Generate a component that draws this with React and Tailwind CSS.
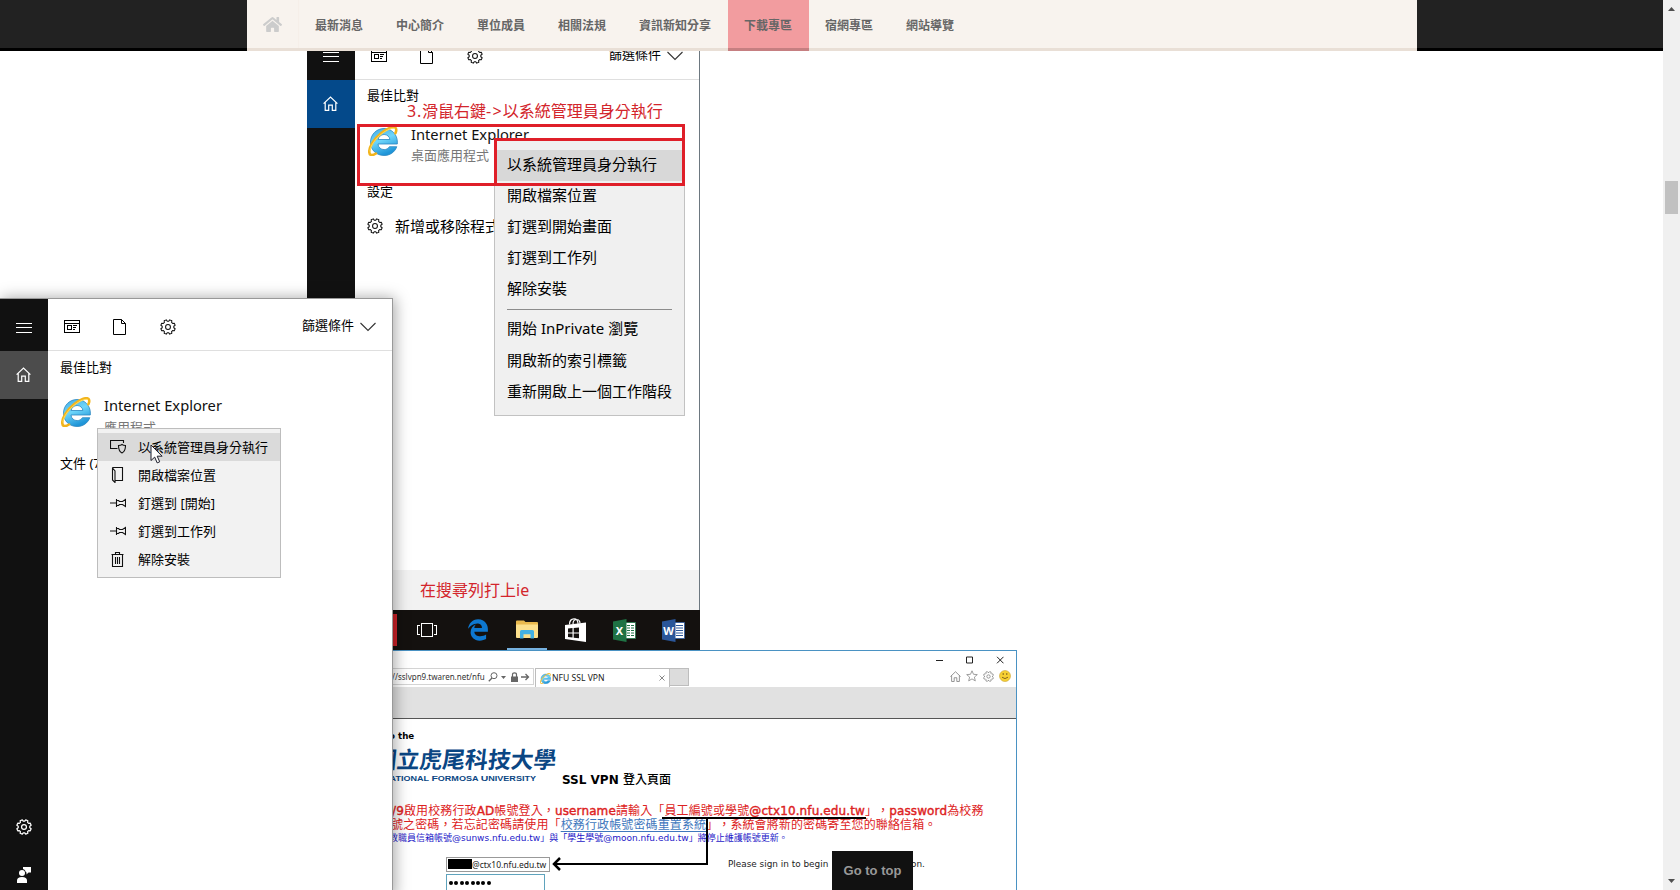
import React from "react";
import { FaHome, FaEdgeLegacy } from "react-icons/fa";

const UI = "font-['Noto_Sans','Noto_Sans_CJK_TC',sans-serif]";

function gearPath(c, outer, inner, teeth) {
  const pts = [];
  const step = (Math.PI * 2) / teeth;
  for (let i = 0; i < teeth; i++) {
    const a = i * step - Math.PI / 2 + step / 2;
    [[-0.34, inner], [-0.2, outer], [0.2, outer], [0.34, inner]].forEach(([k, r]) => {
      pts.push(`${(c + Math.cos(a + k * step) * r).toFixed(2)} ${(c + Math.sin(a + k * step) * r).toFixed(2)}`);
    });
  }
  return `M${pts.join("L")}Z`;
}

function Gear({ size = 17, stroke = "#111", width = 1.1 }) {
  return (
    <svg width={size} height={size} viewBox="0 0 17 17" fill="none" stroke={stroke} strokeWidth={width} strokeLinejoin="round" className="shrink-0">
      <path d={gearPath(8.5, 7.8, 6.2, 8)} />
      <circle cx="8.5" cy="8.5" r="2.6" />
    </svg>
  );
}

function IELogo({ size = 30 }) {
  return (
    <svg width={size} height={size} viewBox="0 0 30 30" fill="none" className="shrink-0">
      <defs>
        <linearGradient id="ieBlue" x1="0" y1="0" x2="0.4" y2="1">
          <stop offset="0" stopColor="#3fa9e4" />
          <stop offset="0.5" stopColor="#6fd6fa" />
          <stop offset="1" stopColor="#1f95d8" />
        </linearGradient>
      </defs>
      <path
        d="M16 2.5C8.500 2.500 2.500 8.500 2.500 16.200 2.500 24 8.500 29.500 16 29.500c6 0 10.800-3.400 12.800-8.800h-7.400c-1.100 1.800-3 2.900-5.200 2.900-3.400 0-6-2.300-6.200-5.600h19.300c.1-.6.1-1.200.1-1.800C29.400 8.500 23.500 2.500 16 2.500Zm-5.900 11c.6-3 3-5 6-5s5.400 2 5.800 5Z"
        fill="url(#ieBlue)"
        stroke="#2b86c0"
        strokeWidth="0.8"
      />
      <path d="M8 27.500C4.500 29.800 1.600 29.800 1.300 26.400 .800 20.500 6.500 12.500 13 7.300 19 2.500 25.500-.200 27.600 2c1 1.200.8 3-.2 5.200" stroke="#f2b41c" strokeWidth="2.600" strokeLinecap="round" />
      <path d="M2 25C2.500 19.500 7.500 12.800 13.400 8.100 18.800 3.800 24 1.700 26.500 2.400" stroke="#ffe36b" strokeWidth="0.9" strokeLinecap="round" />
    </svg>
  );
}

function Burger() {
  return (
    <svg width="16" height="10" viewBox="0 0 16 10" stroke="#fff" strokeWidth="1" shapeRendering="crispEdges">
      <path d="M0 .5h16M0 4.500h16M0 9.500h16" />
    </svg>
  );
}

function HomeOutline({ size = 15, stroke = "#fff" }) {
  return (
    <svg width={size} height={size} viewBox="0 0 15 15" fill="none" stroke={stroke} strokeWidth="1.200">
      <path d="M.6 7.600 7.500 1l6.900 6.600M2.200 6.300v8h3.500V9.200h3.600v5.100h3.500v-8" />
    </svg>
  );
}

function PanelToolbar() {
  return (
    <div className="flex h-[52px] items-center border-b border-[#dfdfdf] pt-[4px] pl-4 pr-4">
      <svg width="16" height="13" viewBox="0 0 16 13" fill="none" stroke="#000" shapeRendering="crispEdges" className="mr-[33px]">
        <path d="M.5.5h15v12H.5zM.5 3.500h15M3.500 5.500h4v4h-4zM9 5.500h4M9 7.500h3M9 9.500h2" />
      </svg>
      <svg width="13" height="16" viewBox="0 0 13 16" fill="none" stroke="#000" className="mr-[34px]">
        <path d="M.5.5h8l4 4v11H.5zM8.500.5v4h4" />
      </svg>
      <Gear size={16} />
      <div className="mb-[3px] ml-auto flex items-center">
        <span className="text-[13px] leading-4 text-black">篩選條件</span>
        <svg width="16" height="10" viewBox="0 0 16 10" fill="none" stroke="#333" strokeWidth="1.100" className="mt-1 ml-[6px]">
          <path d="M.5 1 8 8.500 15.500 1" />
        </svg>
      </div>
    </div>
  );
}

function BackPanel() {
  return (
    <section className="absolute top-[28px] left-[307px] flex h-[622px] w-[393px] flex-col bg-white">
      <div className="flex h-[582px]">
        <div className="flex w-12 flex-col bg-[#111]">
          <div className="flex h-[52px] items-center justify-center pt-[5px]"><Burger /></div>
          <div className="flex h-12 items-center justify-center bg-[#04498a] pr-px pb-px"><HomeOutline /></div>
        </div>
        <div className="flex flex-1 flex-col border-r border-[#6d7880]">
          <PanelToolbar />
          <div className="mt-[6px] h-[18px] pl-[12px] text-[13px] leading-[18px]">最佳比對</div>
          <div className="mt-[22px] flex pl-[13px]">
            <IELogo />
            <div className="-mt-[2px] ml-[13px]">
              <div className="h-[21px] text-[14.700px] leading-5 text-[#111]">Internet Explorer</div>
              <div className="h-5 text-[13px] leading-5 text-[#777]">桌面應用程式</div>
            </div>
          </div>
          <div className="mt-[17px] h-[18px] pl-[12px] text-[13px] leading-[18px]">設定</div>
          <div className="mt-[16px] flex h-5 items-center pl-[12px] text-[15px] leading-5">
            <Gear size={16} />
            <span className="ml-[12px]">新增或移除程式</span>
          </div>
          <div className="mt-auto flex h-10 items-center bg-[#f2f2f2] pl-[65px] text-[16px] leading-6 text-[#d3252c]">在搜尋列打上ie</div>
        </div>
      </div>
      <Taskbar />
      <div className="absolute top-[71px] left-[100px] text-[16px] leading-6 whitespace-nowrap text-[#d3252c]">
        <span className="tracking-[0.800px]">3.</span>滑鼠右鍵<span className="tracking-[1.200px]">-&gt;</span>以系統管理員身分執行
      </div>
      <BackMenu />
      <div className="absolute top-[96px] left-[50px] h-[62px] w-[328px] border-[3px] border-[#df1f29]" />
      <div className="absolute top-[110px] left-[187px] h-[48px] w-[191px] border-[3px] border-[#df1f29]" />
    </section>
  );
}

function BackMenu() {
  const first = ["開啟檔案位置", "釘選到開始畫面", "釘選到工作列", "解除安裝"];
  const second = ["開始 InPrivate 瀏覽", "開啟新的索引標籤", "重新開啟上一個工作階段"];
  return (
    <div className="absolute top-[111px] left-[187px] h-[277px] w-[191px] border border-[#c2c2c2] bg-[#f0f0f0] pt-[10px] text-[15px] text-black">
      <div className="flex h-[31px] items-center bg-[#d8d8d8] pb-1 pl-[12px] leading-5">以系統管理員身分執行</div>
      {first.map((t) => (
        <div key={t} className="flex h-[31px] items-center pb-1 pl-[12px] leading-5">{t}</div>
      ))}
      <div className="mt-[4px] mr-[12px] mb-[3px] ml-[12px] h-px bg-[#8c8c8c]" />
      {second.map((t) => (
        <div key={t} className="flex h-[31.400px] items-center pb-px pl-[12px] leading-5 whitespace-nowrap">{t}</div>
      ))}
    </div>
  );
}

function OfficeIcon({ letter, color, dark }) {
  return (
    <div className="relative flex h-[23px] w-[23px] items-center">
      <svg width="23" height="23" viewBox="0 0 23 23">
        <path d="M12 3.500h10.500v16H12z" fill="#fff" stroke={color} strokeWidth="0.800" />
        <path d="M14 6.500h7M14 9h7M14 11.500h7M14 14h7M14 16.500h7" stroke={color} strokeWidth="1" />
        {letter === "X" && <path d="M17.500 5v13" stroke="#fff" strokeWidth="1" />}
        <path d="M0 2.500 13.500 0v23L0 20.500z" fill={dark} />
      </svg>
      <span className="absolute left-0 w-[13px] text-center text-[11px] leading-none font-bold text-white">{letter}</span>
    </div>
  );
}

function Taskbar() {
  return (
    <div className="flex h-10 bg-[#14110f]">
      <div className="mt-[4px] h-8 w-[90px] border-4 border-[#cf2229]" />
      <div className="ml-[20px] flex items-center">
        <svg width="20" height="14" viewBox="0 0 20 14" fill="none" stroke="#fff" shapeRendering="crispEdges">
          <path d="M4.500.5h11v13h-11zM3 2.500H.5v9H3M17 2.500h2.500v9H17" />
        </svg>
      </div>
      <div className="ml-[30px] flex items-center"><FaEdgeLegacy size={22} color="#0e78d0" /></div>
      <div className="ml-[18px] flex w-10 flex-col items-center border-b-2 border-[#76b1df] pt-[10px]">
        <svg width="22" height="19" viewBox="0 0 22 19">
          <path d="M0 1.500Q0 .5 1 .5h7l1.500 1.500H21q1 0 1 1V17H0z" fill="#e9b94d" />
          <path d="M0 4.500h22V17q0 1-1 1H1q-1 0-1-1z" fill="#fce08c" />
          <path d="M4 18.500v-7q0-1.500 1.500-1.500h11q1.500 0 1.500 1.500v7h-3.500v-4.300h-7v4.300z" fill="#43b1e3" />
        </svg>
      </div>
      <div className="ml-[18px] flex items-center">
        <svg width="21" height="24" viewBox="0 0 21 24">
          <path d="M0 7 21 4.500V24L0 21z" fill="#fff" />
          <path d="M4.500 6.500C4.500 2 7 .8 9 .8s4 1.500 4 5M8 6C8 2.500 9.800 1.500 11.500 1.500S15 2.800 15 5.500" fill="none" stroke="#fff" strokeWidth="1.200" />
          <path d="M3 10.500l4.500-.4v4.300H3zM8.700 10l5.300-.5v4.900H8.700zM3 15.500h4.500v4L3 19zM8.700 15.500H14v4.800l-5.300-.6z" fill="#14110f" />
        </svg>
      </div>
      <div className="ml-[27px] flex items-center"><OfficeIcon letter="X" color="#217346" dark="#1f7244" /></div>
      <div className="ml-[26px] flex items-center"><OfficeIcon letter="W" color="#2b579a" dark="#2a5699" /></div>
    </div>
  );
}

const L = ({ children }) => <span className="font-['DejaVu_Sans'] text-[12px] [-webkit-text-stroke:0.400px]">{children}</span>;

function VpnWindow() {
  return (
    <section className="absolute top-[650px] left-[380px] h-[260px] w-[637px] overflow-hidden border-t border-r border-[#4a92c3] bg-white">
      <div className="flex h-[36px]">
        <div className="mt-[17px] flex h-[17px] w-[154px] items-center border border-l-0 border-[#d4d4d4] pl-[12px] text-[#555]">
          <span className="w-[93px] text-[8px] leading-3 whitespace-nowrap text-[#333]">//sslvpn9.twaren.net/nfu</span>
          <svg width="42" height="10" viewBox="0 0 42 10" fill="none" stroke="#666" className="ml-[3px]">
            <circle cx="6" cy="3.700" r="3" />
            <path d="M4 6 .8 9.200" strokeWidth="1.300" />
            <path d="M13 4h5l-2.500 3z" fill="#666" stroke="none" />
            <path d="M23 4.500h7V10h-7z" fill="#666" stroke="none" />
            <path d="M24.500 5V2.500q0-1.700 2-1.700t2 1.700V5" strokeWidth="1.200" />
            <path d="M33 5h7.500M37.500 2l3 3-3 3" strokeWidth="1.300" />
          </svg>
        </div>
        <div className="mt-[17px] ml-px flex h-[19px] w-[135px] items-center border border-b-0 border-[#bdbdbd] px-[4px]">
          <IELogo size={11} />
          <span className="ml-px text-[8.600px] leading-3 whitespace-nowrap text-[#222]">NFU SSL VPN</span>
          <svg width="6" height="6" viewBox="0 0 6 6" stroke="#888" className="ml-auto"><path d="M.5.5l5 5M5.500.5l-5 5" /></svg>
        </div>
        <div className="mt-[17px] h-[18px] w-[19px] border border-l-0 border-[#bdbdbd] bg-[#dcdcdc]" />
        <div className="ml-auto flex flex-col items-end">
          <svg width="68" height="8" viewBox="0 0 68 8" fill="none" stroke="#222" className="mt-[5px] mr-[12px]">
            <path d="M0 4.500h7M30.500 1h6v6h-6zM61 .8l6.500 6.500M67.500.8 61 7.300" />
          </svg>
          <div className="mt-[6px] mr-[5px] flex items-center gap-[5px]">
            <HomeOutline size={11} stroke="#888" />
            <svg width="12" height="12" viewBox="0 0 12 12" fill="none" stroke="#888" strokeWidth="0.800"><path d="M6 .8l1.500 3.500 3.800.3-2.900 2.500.9 3.800L6 8.900l-3.300 2 .9-3.800L.7 4.600l3.800-.3z" /></svg>
            <Gear size={11} stroke="#888" width={1.300} />
            <svg width="12" height="12" viewBox="0 0 12 12"><circle cx="6" cy="6" r="5.500" fill="#f7d033" stroke="#c9a43a" strokeWidth="0.600" /><path d="M4.200 3v2M7.800 3v2M3 7.200q3 2.800 6 0" fill="none" stroke="#7a5a18" strokeWidth="0.900" /></svg>
          </div>
        </div>
      </div>
      <div className="h-[32px] border-b border-[#555] bg-[#e1e1e1]" />
      <div className="mt-[12px] h-[11px] pl-[9px] font-['DejaVu_Sans'] text-[8.700px] leading-[11px] font-bold whitespace-nowrap">o the</div>
      <div className="flex">
        <div className="flex w-[170px] flex-col text-[#0a4683]">
          <div className="mt-[4px] -ml-[6px] h-[28px] -skew-x-6 text-[22.800px] leading-[28px] font-bold whitespace-nowrap">國立虎尾科技大學</div>
          <div className="-mt-[2px] ml-[2px] h-3 whitespace-nowrap">
            <svg width="158" height="12" viewBox="0 0 158 12" fill="#0a4683" className="font-['Liberation_Sans'] font-bold">
              <text x="0" y="8.500" fontSize="7.500" textLength="154" lengthAdjust="spacingAndGlyphs">
                N<tspan fontSize="6.500">ATIONAL </tspan>F<tspan fontSize="6.500">ORMOSA </tspan>U<tspan fontSize="6.500">NIVERSITY</tspan>
              </text>
            </svg>
          </div>
        </div>
        <div className="mt-[30px] ml-[12px] h-4 font-['DejaVu_Sans','Noto_Sans_CJK_TC',sans-serif] text-[12px] leading-4 font-bold whitespace-nowrap">SSL VPN <span className="font-medium">登入頁面</span></div>
      </div>
      <div className="mt-[15px] text-[12px] tracking-[0.120px] whitespace-nowrap text-[#dd2222] [text-spacing-trim:space-all]">
        <div className="h-[15px] pl-[12px] leading-[15px]">
          <L>/9</L>啟用校務行政<L>AD</L>帳號登入，<L>username</L>請輸入「員工編號或學號<L>@ctx10.nfu.edu.tw</L>」，<L>password</L>為校務
        </div>
        <div className="h-[14px] pl-[11px] leading-[14px]">
          號之密碼，若忘記密碼請使用「<span className="text-[#3f78bd] underline underline-offset-2">校務行政帳號密碼重置系統</span>」，系統會將新的密碼寄至您的聯絡信箱。
        </div>
      </div>
      <div className="h-3 pl-[9px] font-['DejaVu_Sans','Noto_Sans_CJK_TC',sans-serif] text-[9px] leading-3 whitespace-nowrap text-[#1d18c8] [text-spacing-trim:space-all]">
        教職員信箱帳號@sunws.nfu.edu.tw」與「學生學號@moon.nfu.edu.tw」將停止維護帳號更新。
      </div>
      <div className="mt-[13px] flex pl-[66px]">
        <div className="flex flex-col gap-[2px]">
          <div className="flex h-[15px] w-[104px] border border-[#999] pl-px">
            <div className="mt-px h-[10px] w-6 bg-black" />
            <span className="text-[8.500px] leading-[13px] text-[#222]">@ctx10.nfu.edu.tw</span>
          </div>
          <div className="flex h-[20px] w-[99px] gap-[1.400px] border border-[#5fa3bd] pt-[6px] pl-[2px]">
            {Array.from({ length: 8 }, (_, i) => <span key={i} className="h-[4px] w-[4px] rounded-full bg-black" />)}
          </div>
        </div>
        <div className="mt-px ml-[178px] font-['DejaVu_Sans'] text-[8.900px] leading-3 whitespace-nowrap text-[#222]">
          <span className="inline-block w-[183px]">Please sign in to begin</span>on.
        </div>
      </div>
      <svg width="320" height="56" viewBox="0 0 320 56" fill="none" stroke="#000" strokeWidth="2" className="absolute top-[164px] left-[170px]">
        <path d="M112 3h204M157 3v46H4" />
        <path d="M10 43 4 49l6 6" strokeWidth="2.500" />
      </svg>
    </section>
  );
}

const ICONS = {
  admin: <path d="M7.500 9.500H.5v-8h13V4M12 5.500c1 .8 2.200 1 3.500 1 0 4-.5 6-3.500 7.500-3-1.500-3.500-3.500-3.500-7.500 1.300 0 2.500-.2 3.500-1z" />,
  folder: <path d="M5 13.500h7.500V.5H3l-.5.5v12L5 15.500V4L2.500 1M12.500 10v3.500" />,
  pin: <path d="M0 8h6M6.500 4v8M6.500 5.500h2l1 1h3l3-2v7l-3-2h-3l-1 1h-2" />,
  trash: <path d="M1.500 3.500h12M5.500 3.500v-2h4v2M2.500 3.500v12h10v-12M5.500 6v7M7.500 6v7M9.500 6v7" />,
};

function FrontMenu() {
  const rows = [
    ["admin", "以系統管理員身分執行"],
    ["folder", "開啟檔案位置"],
    ["pin", "釘選到 [開始]"],
    ["pin", "釘選到工作列"],
    ["trash", "解除安裝"],
  ];
  return (
    <div className="absolute top-[129px] left-[97px] h-[150px] w-[184px] border border-[#bdbdbd] bg-[#f2f2f2] pt-1 text-[13px] leading-5 text-black">
      {rows.map(([icon, label], i) => (
        <div key={label} className={i === 0 ? "flex h-7 items-center bg-[#dadada] pl-3" : "flex h-7 items-center pl-3"}>
          <svg width="16" height="16" viewBox="0 0 16 16" fill="none" stroke="#111" strokeWidth="1.100" className="mr-[12px] shrink-0">{ICONS[icon]}</svg>
          {label}
        </div>
      ))}
      <svg width="13" height="20" viewBox="0 0 13 20" className="absolute top-[15px] left-[52px]">
        <path d="M1 1v15.500l3.700-3.400 2.500 5.800 2.500-1.100-2.500-5.600h4.900z" fill="#fff" stroke="#1d1d2b" />
      </svg>
    </div>
  );
}

function FrontPanel() {
  return (
    <section className="absolute top-[298px] left-0 flex h-[600px] w-[393px] border-t border-r border-[#999] bg-white shadow-[2px_0_14px_rgba(0,0,0,0.35)]">
      <div className="flex h-[592px] w-12 flex-col bg-[#111]">
        <div className="flex h-[52px] items-center justify-center pt-[5px]"><Burger /></div>
        <div className="flex h-12 items-center justify-center bg-[#4c4c4c] pr-px pb-px"><HomeOutline /></div>
        <div className="mt-auto flex flex-col items-center pb-[8px]">
          <Gear size={16} stroke="#fff" width={1.300} />
          <svg width="14" height="16" viewBox="0 0 14 16" fill="#fff" className="mt-[32px]">
            <circle cx="5" cy="6" r="3" />
            <path d="M0 16v-2.500Q0 10 5 10t5 3.500V16zM6 0h8v5.500h-2.500L9.500 7.500V5.500L8.800 5A4 4 0 0 0 6 2z" />
          </svg>
        </div>
      </div>
      <div className="flex flex-1 flex-col">
        <PanelToolbar />
        <div className="mt-[7px] h-[18px] pl-[12px] text-[13px] leading-[18px]">最佳比對</div>
        <div className="mt-[21px] flex pl-[13px]">
          <IELogo />
          <div className="-mt-[2px] ml-[13px]">
            <div className="h-[21px] text-[14.700px] leading-5 text-[#111]">Internet Explorer</div>
            <div className="h-5 pt-px text-[13px] leading-5 text-[#777]">應用程式</div>
          </div>
        </div>
        <div className="mt-[18px] h-[18px] pl-[12px] text-[13px] leading-[18px]">文件 (7</div>
      </div>
      <FrontMenu />
    </section>
  );
}

function Header() {
  const items = ["最新消息", "中心簡介", "單位成員", "相關法規", "資訊新知分享", "下載專區", "宿網專區", "網站導覽"];
  return (
    <header className="absolute top-0 left-0 flex h-[51px] w-[1663px] justify-center border-b-[3px] border-black bg-[#222]">
      <nav className="flex h-[51px] w-[1170px] border-b-[3px] border-[#e9dfd6] bg-[#f8f3ee]">
        <div className="flex w-[52px] items-center justify-center border-r border-[#f6efe9]">
          <FaHome size={19} color="#cccccc" />
        </div>
        {items.map((t) => (
          <a
            key={t}
            className={
              t === "下載專區"
                ? "flex h-[51px] items-center border-b-[3px] border-[#c67f81] bg-[#f29c9f] px-[16.500px] pt-[4px] text-[12px] font-bold text-[#666]"
                : "flex h-12 items-center px-[16.500px] pt-[4px] text-[12px] font-bold text-[#666]"
            }
          >
            {t}
          </a>
        ))}
      </nav>
    </header>
  );
}

function Scrollbar() {
  return (
    <div className="flex w-[17px] flex-col items-center bg-[#f0f0f0]">
      <svg width="7" height="4" viewBox="0 0 7 4" className="mt-[7px]"><path d="M3.500 0 7 4H0z" fill="#505050" /></svg>
      <div className="mt-[170px] h-[33px] w-[13px] bg-[#c1c1c1]" />
      <svg width="7" height="4" viewBox="0 0 7 4" className="mt-auto mb-[7px]"><path d="M0 0h7L3.500 4z" fill="#505050" /></svg>
    </div>
  );
}

export default function App() {
  return (
    <div lang="zh-Hant-TW" className={`flex h-[890px] w-[1680px] overflow-hidden bg-white text-black ${UI}`}>
      <main className="relative flex-1 overflow-hidden">
        <BackPanel />
        <VpnWindow />
        <FrontPanel />
        <Header />
        <a className="absolute top-[851px] left-[832px] flex h-[39px] w-[81px] items-center justify-center bg-[#111] font-['Liberation_Sans'] text-[13px] font-bold text-[#999]">Go to top</a>
      </main>
      <Scrollbar />
    </div>
  );
}
